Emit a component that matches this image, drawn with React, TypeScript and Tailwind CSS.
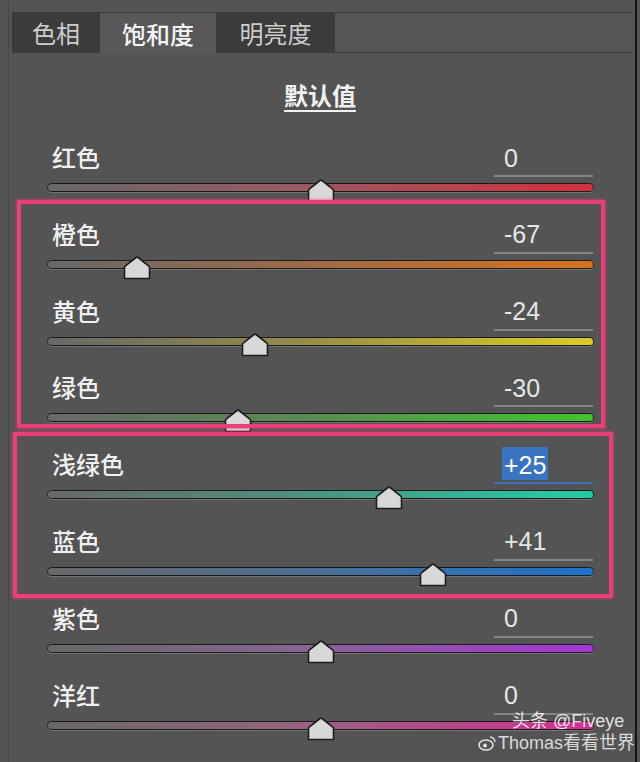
import React from "react";

type Row = { label: string; value: string; v: number; color: string; mid: string; active?: boolean };

const rows: Row[] = [
  { label: "红色", value: "0", v: 0, color: "#d3303d", mid: "#9a5a64" },
  { label: "橙色", value: "-67", v: -67, color: "#d8731f", mid: "#9c6a48" },
  { label: "黄色", value: "-24", v: -24, color: "#dccd22", mid: "#938b4a" },
  { label: "绿色", value: "-30", v: -30, color: "#3fc52c", mid: "#5b8a52" },
  { label: "浅绿色", value: "+25", v: 25, color: "#22cda6", mid: "#4f8f80", active: true },
  { label: "蓝色", value: "+41", v: 41, color: "#1d72cc", mid: "#4f6f92" },
  { label: "紫色", value: "0", v: 0, color: "#a635d6", mid: "#866592" },
  { label: "洋红", value: "0", v: 0, color: "#d62e92", mid: "#966480" },
];

const TRACK_W = 547;

function Thumb() {
  return (
    <svg width="28" height="24" viewBox="0 0 28 24">
      <path d="M1.5 22.5 L1.5 11.5 Q1.5 10.5 2.5 9.8 L13 1.5 Q14 0.8 15 1.5 L25.5 9.8 Q26.5 10.5 26.5 11.5 L26.5 22.5 Z" fill="#d8d8d8" stroke="#1c1c1c" strokeWidth="1.6" strokeLinejoin="round" />
    </svg>
  );
}

function SliderRow({ r }: { r: Row }) {
  const x = ((r.v + 100) / 200) * TRACK_W;
  return (
    <div className="relative h-[76.8px] pl-[47px] pr-[46px]">
      <div className="flex h-[40px] items-center justify-between">
        <span
          className="pl-[5px] text-[24px] font-medium text-[#f1f1f1]"
          style={{ fontFamily: '"Noto Sans CJK SC", sans-serif' }}
        >
          {r.label}
        </span>
        <div
          className={`mr-[1px] flex h-[40px] w-[99px] items-center border-b-2 pl-[8px] ${
            r.active ? "border-[#3f6fb8]" : "border-[#858585]"
          }`}
        >
          <span
            className={`px-[2px] pt-[3px] text-[25px] leading-[30px] ${
              r.active ? "bg-[#3a73c0] text-white" : "text-[#e6e6e6]"
            }`}
            style={{ fontFamily: '"Liberation Sans", Arial, sans-serif' }}
          >
            {r.value}
          </span>
        </div>
      </div>
      <div className="mt-[6px] h-[9px] rounded-full border border-[#1b1b1b] shadow-[0_1px_0_#737373]">
        <div
          className="h-full w-full rounded-full"
          style={{ background: `linear-gradient(to right, #686868 0%, ${r.mid} 45%, ${r.color} 100%)` }}
        />
      </div>
      <div className="absolute top-[42px]" style={{ left: 47 + x - 14 }}>
        <Thumb />
      </div>
    </div>
  );
}

export default function App() {
  return (
    <div
      className="relative h-[762px] w-[640px] overflow-hidden bg-[#545454]"
      style={{ fontFamily: '"Noto Sans CJK SC", sans-serif' }}
    >
      <div className="absolute left-[8px] top-0 h-full w-[1px] bg-[#474747]" />
      <div className="absolute left-[635px] top-0 h-full w-[2px] bg-[#141414]" />

      {/* Tabs */}
      <div className="pt-[12px] pl-[12px] pr-[8px]">
        <div className="flex h-[41px] w-[620px] border-y border-[#3b3b3b] bg-[#555555]">
          <div className="flex w-[88px] items-center justify-center bg-[#3b3b3b] text-[24px] text-[#cdcdcd]">
            色相
          </div>
          <div className="-mb-[2px] flex w-[116px] items-center justify-center bg-[#585858] text-[24px] font-medium text-[#f4f4f4]">
            饱和度
          </div>
          <div className="flex w-[119px] items-center justify-center bg-[#3b3b3b] text-[24px] text-[#cdcdcd]">
            明亮度
          </div>
          <div className="flex-1" />
        </div>
      </div>

      {/* Default heading */}
      <div className="flex h-[84px] items-center justify-center pb-[1px]">
        <span className="text-[24px] font-bold text-[#f2f2f2] underline decoration-[2px] underline-offset-[5px]">
          默认值
        </span>
      </div>

      {/* Sliders */}
      <div>
        {rows.map((r) => (
          <SliderRow key={r.label} r={r} />
        ))}
      </div>

      {/* Annotation boxes */}
      <div className="pointer-events-none absolute left-[17px] top-[200px] h-[228px] w-[588px] border-[4px] border-[#ec3e7b] shadow-[0_0_3px_#ec3e7b]" />
      <div className="pointer-events-none absolute left-[13px] top-[432px] h-[166px] w-[600px] border-[4px] border-[#ec3e7b] shadow-[0_0_3px_#ec3e7b]" />

      {/* Watermark */}
      <div className="pointer-events-none absolute left-[478px] top-[733px] flex items-center opacity-90">
        <svg width="18" height="16" viewBox="0 0 18 16" className="mr-[2px]">
          <ellipse cx="8" cy="10" rx="7" ry="5" fill="none" stroke="#f0f0f0" strokeWidth="1.6" />
          <circle cx="7" cy="10.5" r="2" fill="#f0f0f0" />
          <path d="M12 2 A5 5 0 0 1 17 7" fill="none" stroke="#f0f0f0" strokeWidth="1.4" />
        </svg>
        <span
          className="text-[18px] leading-[20px] text-[#e8e8e8]"
          style={{ fontFamily: '"Liberation Sans", "Noto Sans CJK SC", sans-serif' }}
        >
          Thomas看看世界
        </span>
      </div>
      <div
        className="pointer-events-none absolute left-[512px] top-[711px] text-[18px] leading-[20px] text-[#f4f4f4]/90"
        style={{ fontFamily: '"Liberation Sans", "Noto Sans CJK SC", sans-serif' }}
      >
        头条 @Fiveye
      </div>
    </div>
  );
}
